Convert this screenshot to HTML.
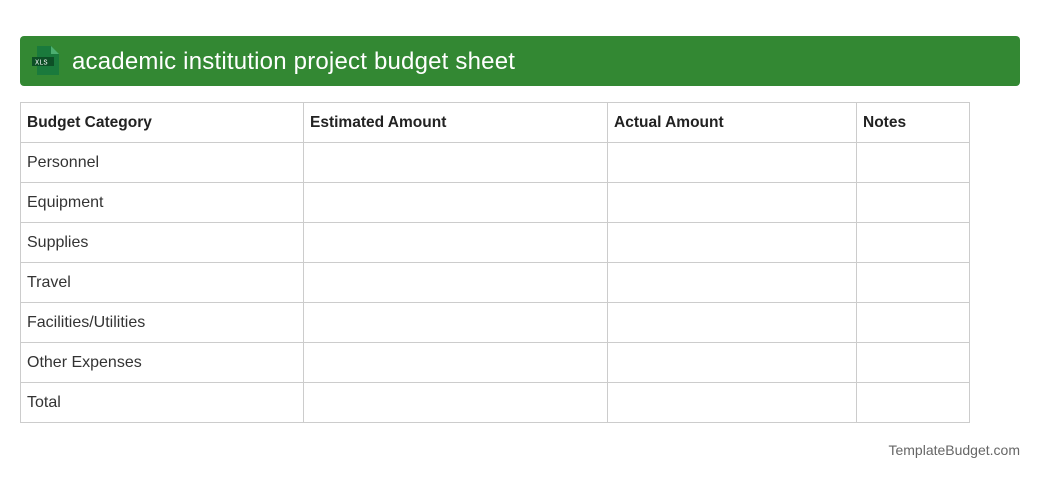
<!DOCTYPE html>
<html><head><style>
body{margin:0;width:1040px;height:480px;background:#fff;font-family:"Liberation Sans",sans-serif;position:relative}
.hdr{position:absolute;left:20px;top:36px;width:1000px;height:50px;background:#338833;border-radius:4px}
.hdr span{position:absolute;left:52px;top:12px;color:#fff;font-size:24px;letter-spacing:0.2px}
table{position:absolute;left:20px;top:102px;border-collapse:collapse;width:950px;table-layout:fixed}
td{border:1px solid #ccc;height:39px;padding:0 0 0 6px;font-size:16px;color:#333}
tr:first-child td{font-weight:bold;color:#222;font-size:15.5px}
.foot{position:absolute;right:20px;top:442px;font-size:14px;color:#666}
</style></head><body>
<div class="hdr">
<svg style="position:absolute;left:11px;top:10px" width="29" height="30" viewBox="0 0 29 30">
<path d="M6 0H20L28 8V29H6Z" fill="#1a7a3c"/><path d="M20 0V8H28Z" fill="#4caf70"/>
<rect x="1" y="11" width="22" height="9" fill="#0d4f26"/>
<text x="4" y="18.5" font-size="7" fill="#fff" font-family="Liberation Mono">XLS</text></svg>
<span>academic institution project budget sheet</span></div>
<table>
<colgroup><col style="width:283px"><col style="width:304px"><col style="width:249px"><col></colgroup>
<tr><td>Budget Category</td><td>Estimated Amount</td><td>Actual Amount</td><td>Notes</td></tr>
<tr><td>Personnel</td><td></td><td></td><td></td></tr>
<tr><td>Equipment</td><td></td><td></td><td></td></tr>
<tr><td>Supplies</td><td></td><td></td><td></td></tr>
<tr><td>Travel</td><td></td><td></td><td></td></tr>
<tr><td>Facilities/Utilities</td><td></td><td></td><td></td></tr>
<tr><td>Other Expenses</td><td></td><td></td><td></td></tr>
<tr><td>Total</td><td></td><td></td><td></td></tr>
</table>
<div class="foot">TemplateBudget.com</div>
</body></html>
